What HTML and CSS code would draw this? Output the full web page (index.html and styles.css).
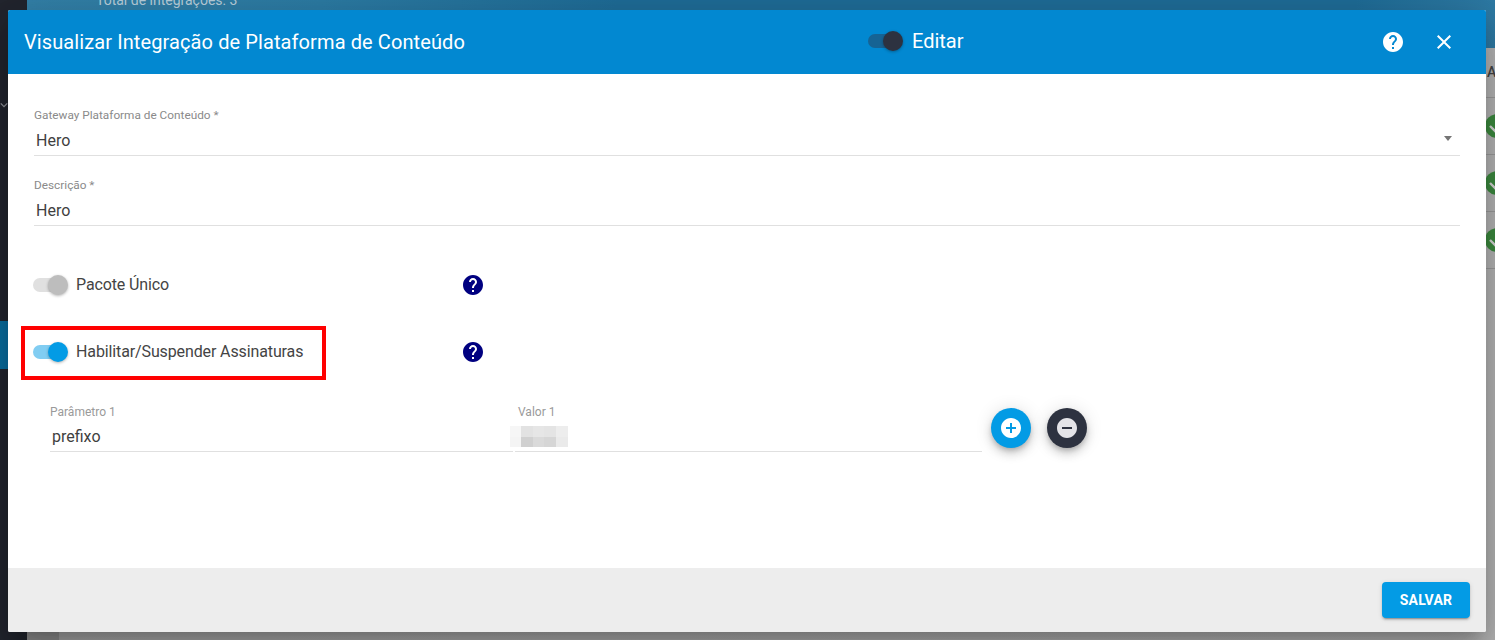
FILE: index.html
```html
<!DOCTYPE html>
<html lang="pt-BR">
<head>
<meta charset="utf-8">
<title>Visualizar Integração de Plataforma de Conteúdo</title>
<link rel="stylesheet" href="styles.css">
</head>
<body>
<div class="page">
  <aside class="sidebar">
    <svg class="side-chevron" viewBox="0 0 10 6"><path d="M1 1l4 4 4-4" fill="none" stroke="#8f9299" stroke-width="1.6"/></svg>
    <div class="side-active"></div>
  </aside>
  <main class="backdrop">
    <div class="banner"><span class="banner-text">Total de integrações: 3</span></div>
    <div class="table">
      <div class="thead">At</div>
      <div class="trow"><svg class="ok" viewBox="0 0 24 24"><circle cx="12" cy="12" r="12" fill="#3c8a3f"/><path d="M5 12l5 5 9-9" fill="none" stroke="#d5d5d5" stroke-width="2.4"/></svg></div>
      <div class="trow"><svg class="ok" viewBox="0 0 24 24"><circle cx="12" cy="12" r="12" fill="#3c8a3f"/><path d="M5 12l5 5 9-9" fill="none" stroke="#d5d5d5" stroke-width="2.4"/></svg></div>
      <div class="trow"><svg class="ok" viewBox="0 0 24 24"><circle cx="12" cy="12" r="12" fill="#3c8a3f"/><path d="M5 12l5 5 9-9" fill="none" stroke="#d5d5d5" stroke-width="2.4"/></svg></div>
    </div>
  </main>
</div>

<section class="modal">
  <header class="modal-header">
    <h1 class="modal-title">Visualizar Integração de Plataforma de Conteúdo</h1>
    <div class="edit-toggle">
      <span class="switch switch-dark"><span class="track"></span><span class="thumb"></span></span>
      <span class="edit-label">Editar</span>
    </div>
    <div class="header-actions">
      <svg class="hicon" viewBox="0 0 24 24"><path fill="#fff" d="M12 2C6.48 2 2 6.48 2 12s4.48 10 10 10 10-4.48 10-10S17.52 2 12 2zm1 17h-2v-2h2v2zm2.07-7.75l-.9.92C13.45 12.9 13 13.5 13 15h-2v-.5c0-1.1.45-2.1 1.17-2.83l1.24-1.26c.37-.36.59-.86.59-1.41 0-1.1-.9-2-2-2s-2 .9-2 2H8c0-2.21 1.79-4 4-4s4 1.79 4 4c0 .88-.36 1.68-.93 2.25z"/></svg>
      <svg class="hicon" viewBox="0 0 24 24"><path fill="#fff" d="M19 6.41L17.59 5 12 10.59 6.41 5 5 6.41 10.59 12 5 17.59 6.41 19 12 13.41 17.59 19 19 17.59 13.41 12z"/></svg>
    </div>
  </header>

  <div class="modal-body">
    <div class="field">
      <label class="field-label">Gateway Plataforma de Conteúdo *</label>
      <div class="field-value">Hero<span class="caret"></span></div>
    </div>
    <div class="field">
      <label class="field-label">Descrição *</label>
      <div class="field-value">Hero</div>
    </div>

    <div class="toggle-row toggle-first">
      <span class="switch switch-off"><span class="track"></span><span class="thumb"></span></span>
      <span class="toggle-label">Pacote Único</span>
      <svg class="help" viewBox="0 0 24 24"><path fill="#000080" d="M12 2C6.48 2 2 6.48 2 12s4.48 10 10 10 10-4.48 10-10S17.52 2 12 2zm1 17h-2v-2h2v2zm2.07-7.75l-.9.92C13.45 12.9 13 13.5 13 15h-2v-.5c0-1.1.45-2.1 1.17-2.83l1.24-1.26c.37-.36.59-.86.59-1.41 0-1.1-.9-2-2-2s-2 .9-2 2H8c0-2.21 1.79-4 4-4s4 1.79 4 4c0 .88-.36 1.68-.93 2.25z"/></svg>
    </div>
    <div class="toggle-row toggle-second">
      <span class="switch switch-on"><span class="track"></span><span class="thumb"></span></span>
      <span class="toggle-label">Habilitar/Suspender Assinaturas</span>
      <svg class="help" viewBox="0 0 24 24"><path fill="#000080" d="M12 2C6.48 2 2 6.48 2 12s4.48 10 10 10 10-4.48 10-10S17.52 2 12 2zm1 17h-2v-2h2v2zm2.07-7.75l-.9.92C13.45 12.9 13 13.5 13 15h-2v-.5c0-1.1.45-2.1 1.17-2.83l1.24-1.26c.37-.36.59-.86.59-1.41 0-1.1-.9-2-2-2s-2 .9-2 2H8c0-2.21 1.79-4 4-4s4 1.79 4 4c0 .88-.36 1.68-.93 2.25z"/></svg>
      <div class="highlight"></div>
    </div>

    <div class="param-row">
      <div class="param param-name">
        <label class="param-label">Parâmetro 1</label>
        <div class="param-value">prefixo</div>
      </div>
      <div class="param param-val">
        <label class="param-label">Valor 1</label>
        <div class="param-value">
          <div class="mosaic"><i></i><i></i><i></i><i></i><i></i><i></i><i></i><i></i><i></i><i></i></div>
        </div>
      </div>
      <button class="fab fab-add" type="button" aria-label="Adicionar"><svg viewBox="0 0 24 24"><path fill="#fff" d="M12 2C6.48 2 2 6.48 2 12s4.48 10 10 10 10-4.48 10-10S17.52 2 12 2zm5 11h-4v4h-2v-4H7v-2h4V7h2v4h4v2z"/></svg></button>
      <button class="fab fab-remove" type="button" aria-label="Remover"><svg viewBox="0 0 24 24"><path fill="#e4e4e8" d="M12 2C6.48 2 2 6.48 2 12s4.48 10 10 10 10-4.48 10-10S17.52 2 12 2zm5 11H7v-2h10v2z"/></svg></button>
    </div>
  </div>

  <footer class="modal-footer">
    <button class="save" type="button">SALVAR</button>
  </footer>
</section>
</body>
</html>
```
FILE: styles.css
```css
* { box-sizing: border-box; }
html, body { margin: 0; height: 100%; overflow: hidden; }
body { font-family: Roboto, "Liberation Sans", sans-serif; background: #22252e; }

/* page behind the dialog */
.page { display: flex; height: 640px; }
.sidebar { position: relative; width: 27px; flex: none; background: #22252e; }
.side-chevron { position: absolute; left: 0; top: 102px; width: 8px; height: 6px; }
.side-active { position: absolute; left: 0; top: 321px; width: 8px; height: 48px; background: #0a6d9f; }
.backdrop { flex: 1; min-width: 0; overflow: hidden; background: linear-gradient(90deg, #8f8f8f 0, #8f8f8f 32px, #a6a6a6 32px, #b4b4b4 100%); }
.banner { height: 48px; padding-left: 69px; overflow: hidden; background: linear-gradient(100deg, #3380a8 0, #2c7ba4 20%, #1f6c97 40%, #1f6c97 90%, #2f7ba5 100%); }
.banner-text { display: block; margin-top: -9px; font-size: 14px; line-height: 18px; color: #b9cfdb; }
.thead { height: 50px; padding: 16px 0 0 1460px; font-size: 14px; font-weight: 500; white-space: nowrap; color: #444; border-bottom: 1px solid #9a9a9a; }
.trow { display: flex; align-items: center; justify-content: flex-end; height: 57px; margin-right: -14px; border-bottom: 1px solid #9a9a9a; }
.ok { width: 24px; height: 24px; }

/* dialog */
.modal { position: absolute; left: 8px; top: 10px; width: 1478px; height: 622px; display: flex; flex-direction: column; background: #fff; border-radius: 2px; box-shadow: 0 11px 15px -7px rgba(0,0,0,.2), 0 24px 38px 3px rgba(0,0,0,.14), 0 9px 46px 8px rgba(0,0,0,.12); }
.modal-header { display: flex; align-items: center; height: 64px; flex: none; padding-left: 16px; background: #0288d1; color: #fff; border-radius: 2px 2px 0 0; }
.modal-title { width: 844px; flex: none; margin: 0; font-size: 20px; font-weight: 400; line-height: 28px; letter-spacing: .1px; white-space: nowrap; }
.edit-toggle { display: flex; align-items: center; gap: 9px; margin-top: -2px; }
.edit-label { font-size: 20px; line-height: 24px; }
.header-actions { display: flex; align-items: center; gap: 27px; margin-left: auto; padding-right: 30px; }
.hicon { display: block; width: 24px; height: 24px; }

/* switches */
.switch { position: relative; display: block; flex: none; width: 35px; height: 20px; }
.track { position: absolute; left: 0; top: 3px; width: 33px; height: 14px; border-radius: 7px; }
.thumb { position: absolute; right: 0; top: 0; width: 20px; height: 20px; border-radius: 50%; box-shadow: 0 1px 3px rgba(0,0,0,.3); }
.switch-dark .track { background: #166394; }
.switch-dark .thumb { background: #2d3240; }
.switch-off .track { background: #e0e0e0; }
.switch-off .thumb { background: #bdbdbd; }
.switch-on .track { background: #81cdf2; }
.switch-on .thumb { background: #039be5; }

/* body */
.modal-body { flex: 1; min-height: 0; padding: 34px 26px 0 26px; }
.field { height: 70px; }
.field-label { display: block; height: 14px; font-size: 11.8px; line-height: 14px; color: #8a8a8a; }
.field-value { position: relative; height: 34px; padding: 7px 0 0 2px; font-size: 16px; line-height: 23px; color: #3f3f3f; border-bottom: 1px solid #e0e0e0; }
.caret { position: absolute; right: 8px; top: 14px; width: 0; height: 0; border: 4.5px solid transparent; border-bottom: 0; border-top: 5px solid #757575; }

.toggle-row { position: relative; display: flex; align-items: center; height: 24px; font-size: 16px; letter-spacing: -.12px; color: #444; }
.toggle-first { margin-top: 25px; }
.toggle-second { margin-top: 43px; }
.toggle-row .switch { margin-left: -1px; }
.toggle-label { width: 385px; flex: none; margin-left: 8px; line-height: 24px; white-space: nowrap; }
.help { display: block; width: 24px; height: 24px; flex: none; }
.highlight { position: absolute; left: -13px; top: -14px; width: 305px; height: 54px; border: 4px solid #f00; pointer-events: none; }

.param-row { display: flex; align-items: flex-start; margin-top: 41px; padding-left: 16px; }
.param { height: 46px; flex: none; }
.param-name { width: 463px; }
.param-val { width: 467px; margin-left: 2px; }
.param-label { display: block; height: 14px; font-size: 12px; line-height: 14px; color: #9a9a9a; }
.param-val .param-label { padding-left: 3px; }
.param-value { position: relative; height: 33px; padding: 6px 0 0 2px; font-size: 16px; line-height: 23px; color: #3f3f3f; border-bottom: 1px solid #e0e0e0; }
.mosaic { position: absolute; left: -5px; top: 7px; display: grid; grid-template-columns: 11px 12px 11px 12px 12px; grid-template-rows: 11px 10px; }
.mosaic i { display: block; }
.mosaic i:nth-child(1) { background: #f6f6f6; }
.mosaic i:nth-child(2) { background: #e2e2e2; }
.mosaic i:nth-child(3) { background: #e6e6e6; }
.mosaic i:nth-child(4) { background: #e4e4e4; }
.mosaic i:nth-child(5) { background: #ededed; }
.mosaic i:nth-child(6) { background: #f4f4f4; }
.mosaic i:nth-child(7) { background: #d0d0d0; }
.mosaic i:nth-child(8) { background: #dadada; }
.mosaic i:nth-child(9) { background: #d6d6d6; }
.mosaic i:nth-child(10) { background: #eaeaea; }

.fab { display: flex; align-items: center; justify-content: center; width: 40px; height: 40px; padding: 0; flex: none; border: 0; border-radius: 50%; box-shadow: 0 3px 5px -1px rgba(0,0,0,.2), 0 6px 10px 0 rgba(0,0,0,.14), 0 1px 18px 0 rgba(0,0,0,.12); }
.fab svg { display: block; width: 24px; height: 24px; }
.fab-add { margin-left: 9px; margin-top: 3px; background: #039be5; }
.fab-remove { margin-left: 16px; margin-top: 3px; background: #2d3240; }

.modal-footer { display: flex; align-items: center; justify-content: flex-end; height: 64px; flex: none; padding-right: 16px; background: #ededed; border-radius: 0 0 2px 2px; }
.save { width: 88px; height: 36px; padding: 0; border: 0; border-radius: 4px; background: #039be5; color: #fff; font-family: Roboto, "Liberation Sans", sans-serif; font-size: 14px; font-weight: 700; letter-spacing: .2px; box-shadow: 0 3px 1px -2px rgba(0,0,0,.2), 0 2px 2px 0 rgba(0,0,0,.14), 0 1px 5px 0 rgba(0,0,0,.12); }
```
